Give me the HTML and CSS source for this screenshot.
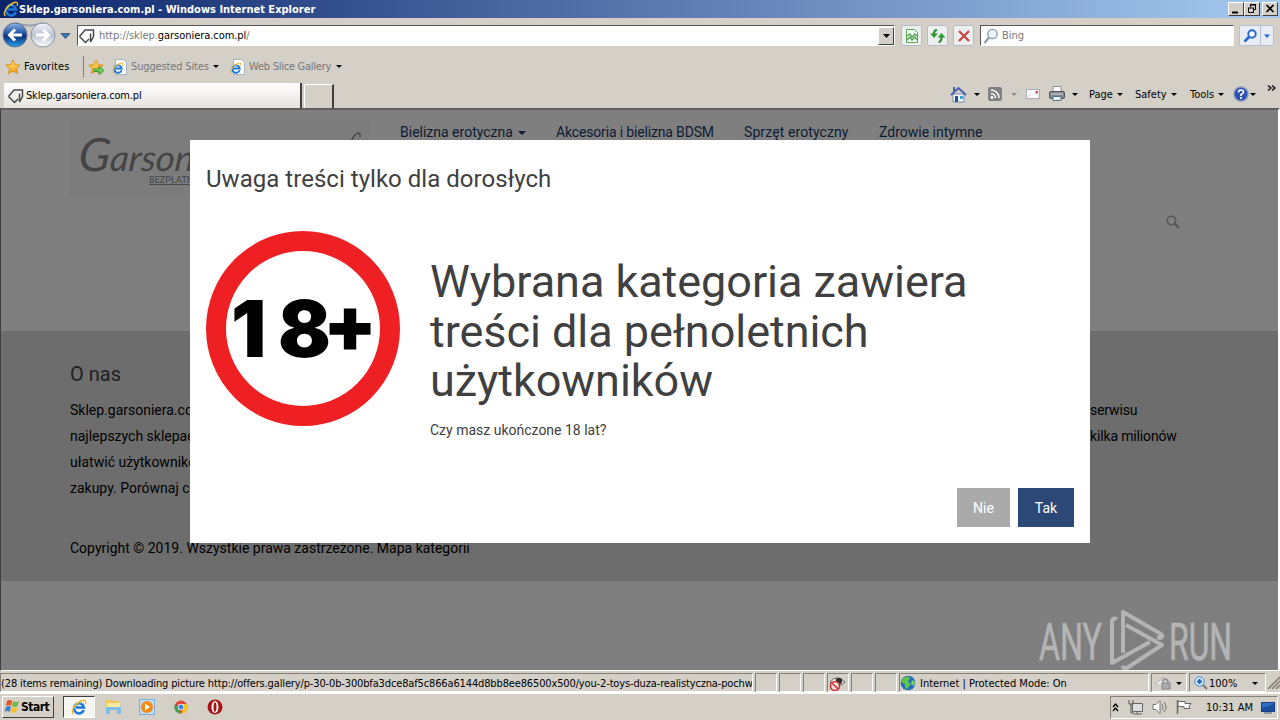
FILE: index.html
```
<!DOCTYPE html>
<html lang="pl">
<head>
    <meta charset="UTF-8">
    <title>Sklep.garsoniera.com.pl</title>
    <link rel="stylesheet" href="styles.css">
</head>
<body>
    <svg class="defs" width="0" height="0">
        <defs>
            <linearGradient id="blueBall" x1="0" y1="0" x2="0" y2="1">
                <stop offset="0" stop-color="#8db4e8"/><stop offset=".45" stop-color="#1d4f9f"/><stop offset=".55" stop-color="#0a2f78"/><stop offset="1" stop-color="#2ba3ee"/>
            </linearGradient>
            <linearGradient id="greyBall" x1="0" y1="0" x2="0" y2="1">
                <stop offset="0" stop-color="#f4f6fb"/><stop offset=".5" stop-color="#bac3d4"/><stop offset="1" stop-color="#fff"/>
            </linearGradient>
            <linearGradient id="gold" x1="0" y1="0" x2="0" y2="1">
                <stop offset="0" stop-color="#ffe97a"/><stop offset="1" stop-color="#f39a12"/>
            </linearGradient>
            <symbol id="ie" viewBox="0 0 16 16">
                <path d="M12.800 11A5 5 0 1 1 13 8.600H5" fill="none" stroke="#1c78d8" stroke-width="2.500"/>
                <path d="M4 6.500A4.500 4.500 0 0 1 10 4" fill="none" stroke="#8fd0f8" stroke-width="1"/>
                <path d="M2.500 14.800C-1 13 4 4.500 10 2c4-1.700 5.500 0 4 3" fill="none" stroke="#efb72a" stroke-width="1.400"/>
            </symbol>
            <symbol id="iepage" viewBox="0 0 16 16">
                <path d="M3.500 .5h8l3 3v12h-11z" fill="#fff" stroke="#a9b4c2"/>
                <use href="#ie" x="0" y="3" width="12" height="12"/>
            </symbol>
            <symbol id="tag" viewBox="0 0 18 16">
                <path d="M1.500 8.500 7 2h8.500v6.500L12.500 14V5.500M1.500 8.500l6 6L11 11" fill="none" stroke="#4a4a4a" stroke-width="1.500"/>
            </symbol>
            <symbol id="star" viewBox="0 0 16 16">
                <path d="M8 1l2.100 4.600 5 .5-3.700 3.400 1.100 5L8 12l-4.500 2.500 1.100-5L.9 6.100l5-.5z" fill="url(#gold)" stroke="#d58a12" stroke-width=".9"/>
            </symbol>
        </defs>
    </svg>

    <div class="screen">
        <div class="titlebar">
            <svg class="i16"><use href="#ie"/></svg>
            <span class="title">Sklep.garsoniera.com.pl - Windows Internet Explorer</span>
            <div class="winbtn"><svg width="14" height="12"><path d="M3 9.500h6" stroke="#000" stroke-width="2"/></svg></div>
            <div class="winbtn"><svg width="14" height="12"><path d="M5.500 4V1.500h5v5H9M5 2h6M3 5h6M3.500 5v4.500h5V5" fill="none" stroke="#000"/></svg></div>
            <div class="winbtn close"><svg width="14" height="12"><path d="M3.500 2l7 7M10.500 2l-7 7" stroke="#000" stroke-width="1.700"/></svg></div>
        </div>

        <div class="navbar">
            <svg class="travel" width="74" height="30" viewBox="0 0 74 30">
                <path d="M15 4Q29 9 43 4" fill="none" stroke="#9aa0b4" stroke-width="2"/>
                <circle cx="15" cy="16" r="12" fill="url(#blueBall)" stroke="#66718c"/>
                <path d="M22 16H10M15 10.500 9.500 16l5.500 5.500" fill="none" stroke="#fff" stroke-width="3"/>
                <circle cx="43" cy="16" r="12" fill="url(#greyBall)" stroke="#8b93a5"/>
                <path d="M36 16h12M43 10.500 48.500 16 43 21.500" fill="none" stroke="#fff" stroke-width="3"/>
                <path d="M61 14.500h9l-4.500 5z" fill="#3c7ab0" stroke="#22547e" stroke-width=".8"/>
            </svg>
            <div class="field address">
                <svg width="18" height="16"><use href="#tag"/></svg>
                <span class="url">http://sklep.<b>garsoniera.com.pl</b>/</span>
                <div class="drop"><svg width="7" height="4"><path d="M0 0h7L3.500 4z"/></svg></div>
            </div>
            <div class="toolbtn"><svg width="14" height="16"><path d="M1.500 1.500h8l3 3v10h-11z" fill="#eef8ee" stroke="#5aa55a"/><path d="M2 8l3-2 2 3 3-3 2 2M2 12l3-3 2 3 3-3 2 3" fill="none" stroke="#3f9a45" stroke-width="1.200"/></svg></div>
            <div class="toolbtn"><svg width="16" height="16"><path d="M7 2Q4 2 4 6M8.500 14q3 0 3-5" fill="none" stroke="#2c8a35" stroke-width="2.200"/><path d="M0 5.500h8L4 10zM7.500 9.500h8L11.500 5z" fill="#2c9a35"/></svg></div>
            <div class="toolbtn"><svg width="14" height="14"><path d="M2 2l10 10M12 2 2 12" stroke="#c94848" stroke-width="2.400"/></svg></div>
            <div class="field search">
                <svg width="16" height="16"><circle cx="9.500" cy="6" r="4.700" fill="#eaf2fb" stroke="#8c98a8" stroke-width="1.300"/><path d="M6 9.500 1.500 15" stroke="#8c98a8" stroke-width="2"/></svg>
                <span>Bing</span>
            </div>
            <div class="go">
                <svg width="20" height="20"><circle cx="12" cy="8" r="3.700" fill="#fff" stroke="#2467cf" stroke-width="2"/><path d="M9 11 4.500 15.500" stroke="#2467cf" stroke-width="2.600"/></svg>
                <svg class="godrop" width="12" height="20"><path d="M3 8.500h6l-3 3.500z" fill="#2467cf"/></svg>
            </div>
        </div>

        <div class="favbar">
            <svg class="i16"><use href="#star"/></svg>
            <span class="favorites">Favorites</span>
            <svg width="16" height="16"><use href="#star"/><path d="M6 10h5V7l5 4.500-5 4v-3H6z" fill="#6fd058" stroke="#2c8a2a" stroke-width=".8"/></svg>
            <svg class="i16 page"><use href="#iepage"/></svg>
            <span class="grey sites">Suggested Sites</span>
            <svg class="arrow" width="6" height="3"><path d="M0 0h6L3 3z"/></svg>
            <svg class="i16 page2"><use href="#iepage"/></svg>
            <span class="grey slices">Web Slice Gallery</span>
            <svg class="arrow" width="6" height="3"><path d="M0 0h6L3 3z"/></svg>
        </div>

        <div class="tabrow">
            <div class="tab"><svg width="18" height="16"><use href="#tag"/></svg><span>Sklep.garsoniera.com.pl</span></div>
            <div class="newtab"></div>
            <div class="commands">
                <svg class="home" width="17" height="17"><path d="M3 8h11v8H3z" fill="#f3f6fc" stroke="#7d8db0"/><path d="M1 9 8.500 2 16 9M4 5V1" fill="none" stroke="#4a5fa8" stroke-width="2"/><path d="M5 10h3v6H5z" fill="#2b4b90"/><path d="M10 10h3v3h-3z" fill="#37a3d8"/></svg>
                <svg class="a1" width="6" height="3"><path d="M0 0h6L3 3z"/></svg>
                <svg class="rss" width="14" height="14"><rect width="14" height="14" rx="2" fill="#828282"/><circle cx="4" cy="10.500" r="1.400" fill="#fff"/><path d="M3 6.500a4.500 4.500 0 0 1 4.500 4.500M3 3a8 8 0 0 1 8 8" fill="none" stroke="#fff" stroke-width="1.500"/></svg>
                <svg class="a2" width="6" height="3"><path d="M0 0h6L3 3z" fill="#8c8c8c"/></svg>
                <svg class="mail" width="15" height="11"><rect x=".5" y=".5" width="13" height="9" fill="#fafafa" stroke="#a9abb5"/><path d="M2 8l3-3M13 8l-3-3" stroke="#d4d4dc"/><path d="M9.500 2h2.500v2.500H9.500z" fill="#d04a5e"/></svg>
                <svg class="printer" width="17" height="16"><path d="M4 .5h8v6H4z" fill="#fff" stroke="#909090"/><rect x=".5" y="5.500" width="15" height="7" rx="1.500" fill="#848890" stroke="#555"/><path d="M2 8h12" stroke="#d2d4d8"/><path d="M4 10.500h8v4H4z" fill="#e7f3fb" stroke="#578"/></svg>
                <svg class="a3" width="6" height="3"><path d="M0 0h6L3 3z"/></svg>
                <span class="c1">Page</span>
                <svg width="6" height="3"><path d="M0 0h6L3 3z"/></svg>
                <span class="c2">Safety</span>
                <svg width="6" height="3"><path d="M0 0h6L3 3z"/></svg>
                <span class="c3">Tools</span>
                <svg width="6" height="3"><path d="M0 0h6L3 3z"/></svg>
                <svg class="help" width="16" height="16"><circle cx="8" cy="8" r="7" fill="#2c52b5" stroke="#8797bd" stroke-width="1.300"/><path d="M5.500 6.500q0-2.500 2.500-2.500t2.500 2q0 1.500-2.500 2.500v1.500M8 11v2" fill="none" stroke="#fff" stroke-width="1.700"/></svg>
                <svg width="6" height="3"><path d="M0 0h6L3 3z"/></svg>
                <svg class="more" width="9" height="7"><path d="M1 .5l3 2.500-3 2.500M5 .5l3 2.500-3 2.500" fill="none" stroke="#000" stroke-width="1.300"/></svg>
            </div>
        </div>

        <div class="viewport">
            <div class="header">
                <div class="logo">
                    <svg width="300" height="77">
                        <text x="12" y="51" font-size="36" textLength="172" lengthAdjust="spacingAndGlyphs" transform="skewX(-5)" class="script"><tspan font-size="46">G</tspan>arsoniera</text>
                        <text x="79" y="63" textLength="52" class="ship">BEZPŁATNIE</text>
                        <path d="M281 21q5-10 9-7v3" fill="none" stroke="#454545" stroke-width="1.500"/>
                    </svg>
                </div>
                <div class="menu">
                    <span class="m1">Bielizna erotyczna <i></i></span>
                    <span class="m2">Akcesoria i bielizna BDSM</span>
                    <span class="m3">Sprzęt erotyczny</span>
                    <span class="m4">Zdrowie intymne</span>
                </div>
                <svg class="lookup" width="14" height="14"><circle cx="5.500" cy="5.500" r="4.200" fill="none" stroke="#555" stroke-width="1.600"/><path d="M8.500 8.500l4.500 4.500" stroke="#555" stroke-width="2"/></svg>
            </div>
            <div class="about">
                <h4>O nas</h4>
                <div class="line"><span>Sklep.garsoniera.com.pl</span><span class="end">serwisu</span></div>
                <div class="line"><span>najlepszych sklepach</span><span class="end">kilka milionów</span></div>
                <div class="line"><span>ułatwić użytkownikom</span></div>
                <div class="line"><span>zakupy. Porównaj ceny</span></div>
                <p class="copy">Copyright © 2019. Wszystkie prawa zastrzeżone. Mapa kategorii</p>
            </div>

            <div class="modal">
                <h5>Uwaga treści tylko dla dorosłych</h5>
                <div class="warning">
                    <svg width="194" height="196">
                        <ellipse cx="97" cy="97.500" rx="87" ry="87.500" fill="#fff" stroke="#ee2024" stroke-width="20"/>
                        <text x="25 72 117" y="126 126 121" class="age">18+</text>
                    </svg>
                    <div class="message">
                        <h1>Wybrana kategoria zawiera<br>treści dla pełnoletnich<br>użytkowników</h1>
                        <p>Czy masz ukończone 18 lat?</p>
                    </div>
                </div>
                <div class="buttons"><button class="no">Nie</button><button class="yes">Tak</button></div>
            </div>

            <svg class="watermark" width="196" height="62" viewBox="0 0 196 62">
                <g fill="#b4b4b4" stroke="#b4b4b4" stroke-width=".7">
                    <text x="1" y="51" textLength="63" lengthAdjust="spacingAndGlyphs">ANY</text>
                    <text x="131" y="51" textLength="63" lengthAdjust="spacingAndGlyphs">RUN</text>
                </g>
                <g fill="none" stroke="#b4b4b4" stroke-width="4" stroke-linejoin="round">
                    <path d="M79 10q-5-2-5 3v41l38-21"/>
                    <path d="M85 44V3l38 22q3 3-1 4l-3-1"/>
                    <path d="M88 16l36 20-35 23q-3 1-5-2"/>
                </g>
            </svg>
        </div>

        <div class="statusbar">
            <div class="cell status">(28 items remaining) Downloading picture http://offers.gallery/p-30-0b-300bfa3dce8af5c866a6144d8bb8ee86500x500/you-2-toys-duza-realistyczna-pochw</div>
            <div class="cell small"></div>
            <div class="cell small"></div>
            <div class="cell small"></div>
            <div class="cell small"><svg width="19" height="17"><path d="M2 7q7-8 15 0-7 7-15 0z" fill="#fff" stroke="#555"/><circle cx="11" cy="6" r="3.200" fill="#333"/><circle cx="7" cy="11" r="4.500" fill="#f4dede" stroke="#cc3434" stroke-width="1.600"/><path d="M4 8l6 6" stroke="#cc3434" stroke-width="1.600"/></svg></div>
            <div class="cell small"></div>
            <div class="cell small"></div>
            <div class="cell zone">
                <svg width="16" height="16"><circle cx="8" cy="8" r="7.300" fill="#2170bd"/><path d="M3 3q5-3 7 0L8 7l3 2-4 5Q4 12 5 9L1 7z" fill="#62c24c"/><path d="M12 5l3 2-1 4-3-2z" fill="#7ed35e"/></svg>
                <span>Internet | Protected Mode: On</span>
            </div>
            <div class="cell lock"><svg width="16" height="14"><path d="M1 9q1-5 6-5l1-3 3 4" fill="#eee" stroke="#aaa"/><path d="M8 7V5q2.500-4 5 0v2" fill="none" stroke="#888" stroke-width="1.400"/><rect x="7" y="7" width="8" height="6" fill="#aaa" stroke="#888"/></svg><svg width="6" height="3"><path d="M0 0h6L3 3z"/></svg></div>
            <div class="cell zoom"><svg width="14" height="14"><circle cx="5.500" cy="5.500" r="4.700" fill="#d8ecfc" stroke="#3684d0"/><path d="M3 5.500h5M5.500 3v5" stroke="#1c62b8" stroke-width="2"/><path d="M9 9l4 4" stroke="#777" stroke-width="2"/></svg><span>100%</span><svg width="6" height="3"><path d="M0 0h6L3 3z"/></svg></div>
            <svg class="grip" width="13" height="13"><path d="M1 13 13 1M5 13l8-8M9 13l4-4" stroke="#858078" stroke-width="1.600"/></svg>
        </div>

        <div class="taskbar">
            <div class="start"><svg width="17" height="16"><path d="M3 2q3-2 5 0L7 7Q5 5 2 7z" fill="#e8512c"/><path d="M9 2q3 2 6 0l-1.500 5Q11 9 8 7z" fill="#77b743"/><path d="M2 8q3-2 5 0l-1.500 5Q3 11 .5 13z" fill="#3f7fd4"/><path d="M8 8q3 2 5.500 0L12 13q-3 2-5.500 0z" fill="#f7c229"/></svg><span>Start</span></div>
            <div class="task"><svg class="i16"><use href="#ie"/></svg></div>
            <svg class="app" width="17" height="16"><path d="M1 1h6l1 1h6v6H1z" fill="#f0c75e"/><path d="M2 4h13v6H2z" fill="#fae9a1"/><path d="M1 15V8h15v7h-4v-4H5v4z" fill="#7dbde6"/></svg>
            <svg class="app2" width="16" height="16"><rect x=".5" y=".5" width="15" height="15" fill="#bfdcf4" stroke="#79aedd"/><circle cx="8" cy="8" r="6" fill="#f48a12"/><path d="M6 4.500v7l5-3.500z" fill="#fff"/></svg>
            <svg class="app3" width="14" height="14"><circle cx="7" cy="7" r="6.500" fill="#e34234"/><path d="M1.300 3.700 7 13.500A6.500 6.500 0 0 1 1.300 3.700z" fill="#35a653"/><path d="M7 4h6a6.500 6.500 0 0 1-6 9.500L10 8z" fill="#fbc316"/><circle cx="7" cy="7" r="3.200" fill="#fff"/><circle cx="7" cy="7" r="2.500" fill="#3f7fe8"/></svg>
            <svg class="app4" width="16" height="16"><circle cx="8" cy="8" r="7.500" fill="#a81414"/><ellipse cx="8" cy="8" rx="3.500" ry="6" fill="#fff"/><ellipse cx="8" cy="8" rx="1.500" ry="4.800" fill="#a81414"/></svg>
            <div class="tray">
                <svg width="7" height="9"><path d="M1 4l2.500-3L6 4M1 8l2.500-3L6 8" fill="none" stroke="#000" stroke-width="1.300"/></svg>
                <svg class="net" width="16" height="16"><path d="M4.500 4.500h10v8h-10zM6 15h8M9 12v3" fill="#ddd" stroke="#666"/><path d="M1 1v4h4V1M3 5v9h3" fill="none" stroke="#555"/></svg>
                <svg class="sound" width="17" height="16"><path d="M1 5.500h3l4-4v13l-4-4H1z" fill="#fff" stroke="#777"/><path d="M10 5q2 3 0 6M12 3q4 5 0 10" fill="none" stroke="#777"/></svg>
                <svg class="flag" width="16" height="16"><path d="M1.500 1v14" stroke="#666" stroke-width="1.500"/><path d="M2 2.500h7v2h6l-2 3 1 2H8v-2H2z" fill="#fff" stroke="#666"/></svg>
                <span>10:31 AM</span>
                <svg class="desk" width="14" height="13"><rect x=".5" y="1.500" width="13" height="9" fill="#2f6fc4" stroke="#1c3f80"/><path d="M1 7l12-4v7H1z" fill="#1c4ea0"/><path d="M3 12h8" stroke="#567"/></svg>
            </div>
        </div>
    </div>
</body>
</html>
```
FILE: styles.css
```
* {
    box-sizing: border-box;
}
body {
    margin: 0;
    font-family: "DejaVu Sans Condensed", "DejaVu Sans", sans-serif;
    font-stretch: condensed;
    font-size: 11px;
    color: #000;
}
svg {
    display: block;
    flex: none;
}
span {
    white-space: nowrap;
}
.defs {
    position: absolute;
}
.i16 {
    width: 16px;
    height: 16px;
}
.screen {
    width: 1280px;
    height: 720px;
    background: #d4d0c8;
    display: flex;
    flex-direction: column;
    overflow: hidden;
}

/* title bar */
.titlebar {
    height: 18px;
    display: flex;
    align-items: center;
    padding: 0 2px 0 3px;
    background: linear-gradient(to right, #0a246a, #a6caf0);
}
.title {
    flex: 1;
    color: #fff;
    font-weight: bold;
}
.winbtn {
    width: 16px;
    height: 14px;
    background: #d4d0c8;
    border: 1px solid;
    border-color: #fff #404040 #404040 #fff;
}
.close {
    margin-left: 2px;
}

/* address row */
.navbar {
    height: 34px;
    display: flex;
    align-items: flex-start;
    padding-top: 7px;
}
.travel {
    margin: -6px 3px 0 0;
}
.field {
    height: 21px;
    background: #fff;
    border: 1px solid #fff;
    border-top: 1px solid #555;
    border-left: 1px solid #555;
    display: flex;
    align-items: center;
}
.address {
    width: 818px;
    margin-right: 6px;
}
.url {
    flex: 1;
    margin-left: 3px;
    color: #777;
    letter-spacing: -0.05px;
}
.url b {
    font-weight: normal;
    color: #000;
}
.drop {
    width: 16px;
    height: 18px;
    background: #d4d0c8;
    border: 1px solid;
    border-color: #fff #404040 #404040 #fff;
    display: flex;
    align-items: center;
    justify-content: center;
}
.toolbtn {
    width: 21px;
    height: 21px;
    margin-right: 5px;
    background: #eceef0;
    border: 1px solid #b9bcc4;
    border-radius: 2px;
    display: flex;
    align-items: center;
    justify-content: center;
}
.search {
    width: 254px;
    margin-left: 1px;
    padding-left: 2px;
    gap: 3px;
    color: #777;
}
.go {
    display: flex;
    width: 35px;
    height: 21px;
    margin-left: 5px;
    background: #e8edf5;
    border: 1px solid #b9c0cf;
    border-radius: 2px;
}
.godrop {
    border-left: 1px solid #b9c0cf;
}

/* favorites bar */
.favbar {
    height: 29px;
    display: flex;
    align-items: center;
    padding-left: 5px;
}
.favorites {
    width: 60px;
    height: 22px;
    line-height: 22px;
    margin: 0 4px 0 3px;
    border-right: 1px solid #858078;
    letter-spacing: 0.1px;
}
.grey {
    color: #777;
    margin-left: 3px;
    letter-spacing: -0.15px;
}
.page {
    margin-left: 8px;
}
.sites {
    width: 82px;
}
.page2 {
    margin-left: 11px;
}
.slices {
    width: 87px;
    margin-left: 3px;
    letter-spacing: -0.25px;
}

/* tabs and command bar */
.tabrow {
    height: 27px;
    display: flex;
    padding-left: 4px;
}
.tab {
    width: 298px;
    margin-top: 2px;
    display: flex;
    align-items: center;
    gap: 1px;
    padding-left: 3px;
    background: linear-gradient(#fff, #e6e3de);
    border-right: 2px solid #404040;
    letter-spacing: -0.18px;
}
.newtab {
    width: 30px;
    margin: 3px 0 0 2px;
    border: 1px solid #fff;
    border-right: 2px solid #404040;
    border-bottom: none;
}
.commands {
    flex: 1;
    display: flex;
    align-items: center;
    padding: 0 0 1px 616px;
}
.a1 { margin: 0 8px 0 7px; }
.a2 { margin: 0 12px 0 9px; }
.mail { margin: 0 8px 0 -3px; }
.a3 { margin: 0 11px 0 6px; }
.c1 { width: 28px; }
.c2 { width: 36px; margin-left: 12px; }
.c3 { width: 28px; margin-left: 13px; }
.help { margin: 0 1px 0 9px; }
.more { margin: -12px 0 0 11px; }

/* web page */
.viewport {
    position: relative;
    height: 563px;
    background: #7f7f7f;
    border: 1px solid #404040;
    border-top: 2px solid #606060;
    border-right: 2px solid #fff;
    border-bottom: 1px solid #fff;
    font-family: Roboto, sans-serif;
    font-stretch: normal;
    font-size: 14px;
    overflow: hidden;
}
.header {
    height: 221px;
    display: flex;
    padding: 10px 0 0 69px;
}
.logo {
    width: 300px;
    height: 78px;
    background: #7c7c7c;
}
.script {
    font-family: Lato, sans-serif;
    font-style: italic;
    fill: #444;
}
.ship {
    font: 9px Roboto, sans-serif;
    fill: #444;
    text-decoration: underline;
}
.menu {
    display: flex;
    width: 796px;
    padding: 4px 0 0 30px;
    color: #0d1c33;
}
.menu i {
    display: inline-block;
    border: 4px solid transparent;
    border-top-color: #0d1c33;
    border-bottom: none;
    margin: 0 0 2px 2px;
}
.m1 { width: 156px; }
.m2 { width: 188px; letter-spacing: -0.16px; }
.m3 { width: 135px; letter-spacing: 0.1px; }
.lookup {
    margin-top: 95px;
}
.about {
    height: 250px;
    padding: 31px 69px 0;
    background: #6d6d6d;
}
.about h4 {
    margin: 0 0 11px;
    font-size: 20px;
    line-height: 24px;
    font-weight: normal;
    color: #202020;
}
.line {
    display: flex;
    height: 26px;
    line-height: 26px;
}
.line span:first-child {
    width: 1020px;
}
.end {
    letter-spacing: -0.15px;
}
.copy {
    margin: 37px 0 0;
    line-height: 20px;
}

/* age confirmation */
.modal {
    position: absolute;
    left: 189px;
    top: 30px;
    width: 900px;
    height: 403px;
    padding: 24px 16px 16px;
    background: #fff;
    color: #404040;
}
.modal h5 {
    margin: 0;
    font-size: 24px;
    line-height: 30px;
    font-weight: normal;
    letter-spacing: 0.03px;
}
.warning {
    display: flex;
    gap: 30px;
    height: 196px;
    margin-top: 37px;
}
.age {
    font: 900 78px Inter, sans-serif;
    fill: #000;
}
.message {
    padding-top: 26px;
}
.message h1 {
    margin: 0;
    font-size: 45px;
    line-height: 49.500px;
    font-weight: normal;
    letter-spacing: -0.05px;
}
.message p {
    margin: 14px 0 0;
    line-height: 20px;
}
.buttons {
    display: flex;
    justify-content: flex-end;
    gap: 8px;
    margin-top: 61px;
}
.buttons button {
    height: 39px;
    padding: 0;
    border: none;
    color: #fff;
    font: 14px Roboto, sans-serif;
}
.no {
    width: 53px;
    background: #aaa;
}
.yes {
    width: 56px;
    background: #2c4876;
}
.watermark {
    position: absolute;
    left: 1037px;
    top: 499px;
    font: 52px Roboto, sans-serif;
}

/* status bar */
.statusbar {
    height: 22px;
    display: flex;
    align-items: center;
    padding-top: 2px;
    border-bottom: 1px solid #fff;
}
.cell {
    height: 19px;
    display: flex;
    align-items: center;
    white-space: nowrap;
    overflow: hidden;
    border: 1px solid;
    border-color: #858078 #fff #fff #858078;
    margin-right: 2px;
    padding-top: 1px;
}
.status {
    width: 753px;
    letter-spacing: -0.14px;
}
.small {
    width: 22px;
}
.zone {
    width: 250px;
    gap: 4px;
}
.lock {
    width: 36px;
    padding-left: 3px;
    gap: 5px;
}
.zoom {
    width: 77px;
    padding-left: 4px;
}
.zoom span {
    width: 43px;
    margin-left: 1px;
}
.grip {
    margin-left: -1px;
}

/* taskbar */
.taskbar {
    flex: 1;
    display: flex;
    align-items: center;
    padding: 0 2px;
    border-top: 1px solid #fff;
}
.start {
    width: 52px;
    height: 22px;
    display: flex;
    align-items: center;
    padding-left: 1px;
    font-weight: bold;
    font-size: 12px;
    letter-spacing: -0.5px;
    border: 1px solid;
    border-color: #fff #404040 #404040 #fff;
}
.task {
    width: 32px;
    height: 22px;
    margin-left: 9px;
    display: flex;
    align-items: center;
    justify-content: center;
    background: #f6f5f2;
    border: 1px solid;
    border-color: #404040 #fff #fff #404040;
}
.app { margin-left: 10px; }
.app2 { margin-left: 17px; }
.app3 { margin-left: 19px; }
.app4 { margin-left: 19px; }
.tray {
    width: 168px;
    height: 23px;
    margin-left: auto;
    display: flex;
    align-items: center;
    padding-left: 1px;
    border: 1px solid;
    border-color: #858078 #fff #fff #858078;
}
.net { margin-left: 9px; }
.sound { margin-left: 8px; }
.flag { margin-left: 7px; }
.tray span {
    width: 48px;
    margin-left: 14px;
}
.desk { margin-left: 7px; }
```
